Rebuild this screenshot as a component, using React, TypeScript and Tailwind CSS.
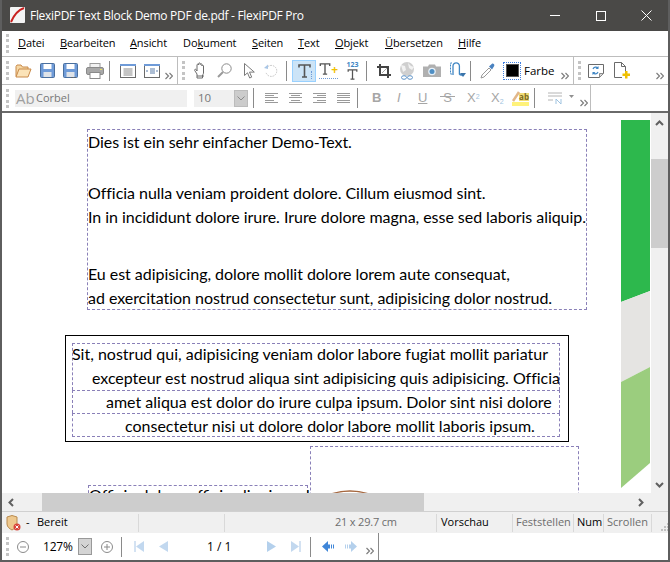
import React from "react";

const ui = "font-['Open_Sans','Liberation_Sans',sans-serif]";
const doc = "font-['Lato','Open_Sans',sans-serif]";

function Grip({ className = "" }: { className?: string }) {
  return <div className={"h-[19px] w-[3px] shrink-0 border-l-[3px] border-dotted border-[#c4c4c4] " + className} />;
}

function Sep({ className = "" }: { className?: string }) {
  return <div className={"h-[20px] w-px shrink-0 bg-[#8a8a8a] " + className} />;
}

function More({ className = "" }: { className?: string }) {
  return (
    <svg width="8" height="8" viewBox="0 0 8 8" className={"shrink-0 " + className} fill="none" stroke="#7d7d7d" strokeWidth="1.2">
      <path d="M.5 1l3 3-3 3M4.5 1l3 3-3 3" />
    </svg>
  );
}

function Svg({ w, h, className = "", children }: { w: number; h: number; className?: string; children: React.ReactNode }) {
  return (
    <svg width={w} height={h} viewBox={`0 0 ${w} ${h}`} fill="none" className={"shrink-0 " + className}>
      {children}
    </svg>
  );
}

const Folder = ({ className }: { className: string }) => (
  <Svg w={17} h={14} className={className}>
    <path d="M1 12.5V2.5L2 1h4l1.500 2H13v2" stroke="#c98a4a" fill="#f5d7a4" />
    <path d="M1 13l3-8h12l-3 8z" stroke="#c98a4a" fill="#fbe3b8" />
  </Svg>
);

const Save = ({ className, dots }: { className: string; dots?: boolean }) => (
  <Svg w={15} h={15} className={className}>
    <rect x=".5" y=".5" width="14" height="14" rx="1" fill="#6f9bd8" stroke="#4a6f9e" />
    <rect x="3.5" y="1" width="8" height="5" fill="#fff" />
    <rect x="3.5" y="9" width="8" height="5" fill="#dfe3e8" />
    {dots && <path d="M8 14h2v1H8zM11 14h2v1h-2z" fill="#666" />}
  </Svg>
);

const Printer = ({ className }: { className: string }) => (
  <Svg w={18} h={16} className={className}>
    <rect x="4" y=".5" width="10" height="5" fill="#f2f2f2" stroke="#9c9c9c" />
    <rect x=".5" y="4.5" width="17" height="7" rx="1.5" fill="#a8a8a8" stroke="#8a8a8a" />
    <rect x="4" y="9.5" width="10" height="6" fill="#fff" stroke="#8a8a8a" />
    <rect x="14" y="6" width="2" height="1" fill="#e8e060" />
  </Svg>
);

const Pane = ({ className, alt }: { className: string; alt?: boolean }) => (
  <Svg w={16} h={14} className={className}>
    <rect x=".5" y=".5" width="15" height="13" fill="#fff" stroke="#6a6a6a" />
    <rect x="0" y="0" width="16" height="2" fill="#6f9bd8" />
    {alt ? (
      <path d="M6 5h5M6 7h5M6 9h5M2 7h2M12 7h2" stroke="#5b7da8" />
    ) : (
      <path d="M3.500 5h9M3.500 7h9M3.500 9h9M3.500 11h9" stroke="#8a8a8a" />
    )}
  </Svg>
);

const Hand = ({ className }: { className: string }) => (
  <Svg w={13} h={17} className={className}>
    <path d="M3 16V12L.7 8.500c-.5-1 .7-1.800 1.500-.8L3 9V3c0-1.200 1.600-1.200 1.600 0V1.800c0-1.200 1.700-1.200 1.700 0V2.500c0-1.100 1.600-1.100 1.600 0V4c0-1 1.600-1 1.600 0v7c0 1-1 2-1 2v3z" stroke="#6a6a6a" fill="#fff" />
    <path d="M3 14h7" stroke="#6a6a6a" />
  </Svg>
);

const Magnifier = ({ className }: { className: string }) => (
  <Svg w={15} h={15} className={className}>
    <circle cx="9.500" cy="5.500" r="4.700" stroke="#8a8a8a" fill="#fff" />
    <path d="M6 9l-5 5" stroke="#9a9a9a" strokeWidth="2" />
  </Svg>
);

const Pointer = ({ className }: { className: string }) => (
  <Svg w={11} h={16} className={className}>
    <path d="M.5.5v12l3-2.700 2.200 5.200 2-.9-2.200-5h4.800z" stroke="#7a7a7a" fill="#fff" />
  </Svg>
);

const Undo = ({ className }: { className: string }) => (
  <Svg w={15} h={14} className={className}>
    <path d="M4 2.500a5.500 5.500 0 1 1-2 6" stroke="#c4c4c4" strokeDasharray="1.5 1" />
    <path d="M0 4l4-3.500V5z" fill="#a9c6e6" />
  </Svg>
);

const BigT = ({ className }: { className: string }) => (
  <Svg w={13} h={14} className={className}>
    <path d="M1 3.500V1h11v2.500M6.500 1v12M4 13h5" stroke="#555" strokeWidth="1.600" />
  </Svg>
);

const Crop = ({ className }: { className: string }) => (
  <Svg w={14} h={14} className={className}>
    <path d="M3 0v11h11M0 3h11v11" stroke="#444" strokeWidth="2" />
    <path d="M5 9l5-5" stroke="#aaa" />
  </Svg>
);

const Globe = ({ className }: { className: string }) => (
  <Svg w={16} h={18} className={className}>
    <circle cx="8" cy="7" r="7" fill="#cfcfcf" />
    <path d="M2 3l4 1 1 4-3 2zM9 1l3 3 3 1-2 3-3-2z" fill="#f2f2f2" />
    <ellipse cx="5" cy="15.500" rx="2.500" ry="1.800" stroke="#5e93c8" />
    <ellipse cx="11" cy="15.500" rx="2.500" ry="1.800" stroke="#5e93c8" />
  </Svg>
);

const Camera = ({ className }: { className: string }) => (
  <Svg w={18} h={13} className={className}>
    <path d="M0 2.500h5l1-2h6l1 2h5V13H0z" fill="#b0b0b0" />
    <circle cx="9" cy="7.500" r="3.800" fill="#e6f0f8" />
    <circle cx="9" cy="7.500" r="2.500" fill="#4f8fc4" />
  </Svg>
);

const Flow = ({ className }: { className: string }) => (
  <Svg w={18} h={17} className={className}>
    <path d="M3 1H1.500v11H3" stroke="#3f86c4" strokeDasharray="2 1" />
    <path d="M5 13V4a3.200 3.200 0 0 1 6.400 0v8a2.500 2.500 0 0 0 4 0" stroke="#3f86c4" strokeWidth="1.300" transform="translate(-1 0)" />
    <path d="M11 11h6l-3 4z" fill="#3a74aa" />
  </Svg>
);

const Dropper = ({ className }: { className: string }) => (
  <Svg w={16} h={16} className={className}>
    <path d="M1 15l1-3 7-7 2 2-7 7z" stroke="#9a9a9a" fill="#fff" />
    <path d="M9 3.500L12 .8c1-.8 3 1 2.200 2.200L12 6.500z" fill="#4a82c0" />
  </Svg>
);

const Refresh = ({ className }: { className: string }) => (
  <Svg w={16} h={14} className={className}>
    <path d="M.5.5h15v9l-4 4H.5z" stroke="#6a6a6a" fill="#fff" />
    <path d="M11.500 9.500v4l4-4z" fill="#d8d8d8" stroke="#8a8a8a" />
    <path d="M5 5a3 3 0 0 1 5-1M10 8a3 3 0 0 1-5 1" stroke="#3f86c4" strokeWidth="1.200" />
    <path d="M10.500 2v3h-3zM4.500 11V8h3z" fill="#3f86c4" />
  </Svg>
);

const NewDoc = ({ className }: { className: string }) => (
  <Svg w={16} h={17} className={className}>
    <path d="M.5 15.500V.5h7l4 4v5M8 15.500H.5M7.500.5v4h4" stroke="#6a6a6a" />
    <path d="M11 9h2.500v2.500H16V14h-2.500v2.500H11V14H8.500v-2.500H11z" fill="#f0c000" />
  </Svg>
);

const AlignIcon = ({ kind, className }: { kind: "l" | "c" | "r" | "j"; className: string }) => {
  const rows = [13, 9, 13, 9, 13];
  return (
    <Svg w={13} h={11} className={className}>
      {rows.map((len, i) => {
        const w = kind === "j" ? 13 : len;
        const x = kind === "l" || kind === "j" ? 0 : kind === "c" ? (13 - w) / 2 : 13 - w;
        return <rect key={i} x={x} y={i * 2 + (i > 2 ? 1 : 0)} width={w} height="1" fill="#9a9a9a" />;
      })}
    </Svg>
  );
};

const menus = [
  ["D", "atei", "w-[42px]"],
  ["B", "earbeiten", "w-[70px]"],
  ["A", "nsicht", "w-[53px]"],
  ["Do", "kument", "w-[69px]"],
  ["S", "eiten", "w-[46px]"],
  ["T", "ext", "w-[37px]"],
  ["O", "bjekt", "w-[50px]"],
  ["Ü", "bersetzen", "w-[73px]"],
  ["H", "ilfe", "w-[40px]"],
];

function MenuBar() {
  return (
    <div className="flex h-[26px] items-center border-b border-[#bdbdbd] bg-white">
      <Grip className="ml-[4px]" />
      <div className="ml-[9px] flex text-[11px] tracking-[-0.1px] text-black">
        {menus.map(([first, rest, w]) => (
          <span key={first} className={w}>
            {first === "Do" ? (
              <>
                Do<span className="underline">k</span>ument
              </>
            ) : (
              <>
                <span className="underline">{first}</span>
                {rest}
              </>
            )}
          </span>
        ))}
      </div>
    </div>
  );
}

function MainToolbar() {
  return (
    <div className="flex h-[28px] items-center border-b border-[#bdbdbd] bg-white">
      <Grip className="ml-[4px]" />
      <Folder className="ml-[6px]" />
      <Save className="ml-[8px]" />
      <Save dots className="ml-[8px]" />
      <Printer className="ml-[8px]" />
      <Sep className="ml-[5px]" />
      <Pane className="ml-[10px]" />
      <Pane alt className="ml-[8px]" />
      <More className="ml-[5px] mt-[10px]" />
      <div className="ml-[4px] h-full w-px bg-[#bdbdbd]" />
      <Grip className="ml-[4px]" />
      <Hand className="ml-[9px]" />
      <Magnifier className="ml-[10px]" />
      <Pointer className="ml-[12px]" />
      <Undo className="ml-[9px]" />
      <Sep className="ml-[7px]" />
      <div className="relative ml-[5px] flex h-[22px] w-[24px] items-center justify-center border border-[#99d1ff] bg-[#cce4f7]">
        <BigT className="" />
        <div className="absolute bottom-[2px] right-[3px] h-[8px] w-px border-r border-dotted border-[#6f9bd8]" />
      </div>
      <div className="relative ml-[3px] h-[16px] w-[19px] shrink-0">
        <BigT className="h-[12px] w-[12px]" />
        <div className="absolute bottom-0 left-0 h-px w-[19px] border-t border-dotted border-[#6f9bd8]" />
        <span className="absolute right-0 top-[1px] text-[12px] font-bold leading-[12px] text-[#f0c000]">+</span>
      </div>
      <div className="ml-[7px] flex w-[15px] shrink-0 flex-col items-center">
        <span className="text-[7px] font-bold leading-[8px] text-[#3f86c4]">123</span>
        <BigT className="h-[11px] w-[11px]" />
      </div>
      <Sep className="ml-[6px]" />
      <Crop className="ml-[10px]" />
      <Globe className="ml-[8px]" />
      <Camera className="ml-[8px]" />
      <Flow className="ml-[8px]" />
      <Sep className="ml-[3px]" />
      <Dropper className="ml-[9px]" />
      <div className="ml-[7px] flex h-[18px] w-[18px] shrink-0 items-center justify-center border border-dotted border-[#3f7fe0]">
        <div className="h-[13px] w-[13px] border border-[#555] bg-black" />
      </div>
      <span className="ml-[3px] w-[32px] shrink-0 text-[11.5px] text-black">Farbe</span>
      <More className="ml-[5px] mt-[10px]" />
      <div className="ml-[4px] h-full w-px bg-[#bdbdbd]" />
      <Grip className="ml-[4px]" />
      <Refresh className="ml-[7px]" />
      <NewDoc className="ml-[10px]" />
      <More className="ml-[26px] mt-[10px]" />
    </div>
  );
}

function FormatToolbar() {
  const gl = "shrink-0 font-['Liberation_Sans',sans-serif] text-[#a6a6a6]";
  return (
    <div className="flex h-[28px] items-start border-b-2 border-[#6a6a6a] bg-white">
      <div className="flex h-[26px] w-[589px] shrink-0 items-center border-r border-[#bdbdbd]">
        <Grip className="ml-[4px]" />
        <div className="ml-[6px] flex h-[17px] w-[172px] shrink-0 items-center bg-[#f0f0f0] text-[11px] text-[#777]">
          <span className="ml-px w-[20px] text-[15px] leading-[15px] text-[#a0a0a0]">Ab</span>
          <span>Corbel</span>
        </div>
        <div className="ml-[7px] flex h-[17px] w-[54px] shrink-0 items-center justify-between bg-[#f0f0f0] pl-[4px] text-[11.5px] text-[#777]">
          10
          <span className="flex h-[17px] w-[14px] items-center justify-center border border-[#bcbcbc] bg-[#cccccc]">
            <svg width="8" height="5" viewBox="0 0 8 5" fill="none" stroke="#8a8a8a">
              <path d="M.5.5L4 4 7.500.5" />
            </svg>
          </span>
        </div>
        <Sep className="ml-[5px]" />
        <AlignIcon kind="l" className="ml-[11px]" />
        <AlignIcon kind="c" className="ml-[11px]" />
        <AlignIcon kind="r" className="ml-[11px]" />
        <AlignIcon kind="j" className="ml-[11px]" />
        <Sep className="ml-[7px]" />
        <span className={gl + " ml-[14px] w-[9px] text-[13px] font-bold"}>B</span>
        <span className={gl + " ml-[16px] w-[6px] text-[13px] italic"}>I</span>
        <span className={gl + " ml-[15px] w-[10px] text-[13px] underline"}>U</span>
        <span className={gl + " relative ml-[12px] w-[15px] text-center text-[13px]"}>
          S
          <span className="absolute left-0 top-[8px] h-px w-[15px] bg-[#a6a6a6]" />
        </span>
        <span className={gl + " ml-[12px] w-[13px] text-[13px]"}>
          X<sup className="text-[7px] text-[#9fc3e0]">2</sup>
        </span>
        <span className={gl + " ml-[11px] w-[13px] text-[13px]"}>
          X<sub className="text-[7px] text-[#9fc3e0]">2</sub>
        </span>
        <div className="relative ml-[8px] h-[16px] w-[17px] shrink-0">
          <div className="absolute bottom-0 h-[4px] w-[17px] bg-[#fff27a]" />
          <div className="absolute right-0 top-[3px] h-[8px] w-[10px] bg-[#f0dd78] text-center text-[8px] font-bold leading-[8px] text-[#7a6a20]">ab</div>
          <svg className="absolute left-0 top-0" width="9" height="12" viewBox="0 0 9 12" fill="none">
            <path d="M1 11l6-9" stroke="#e2b78a" strokeWidth="2.500" />
          </svg>
        </div>
        <Sep className="ml-[5px]" />
        <Svg w={14} h={13} className="ml-[13px]">
          <path d="M0 1h14M0 4h14M0 8h5" stroke="#b4b4b4" />
          <path d="M8 12V7l5 5V7" stroke="#9fc3e0" />
        </Svg>
        <Svg w={5} h={3} className="ml-[7px] mb-[4px]">
          <path d="M0 0h5L2.500 3z" fill="#909090" />
        </Svg>
        <More className="ml-[6px] mt-[10px]" />
      </div>
    </div>
  );
}

function TextLine({ children, className = "" }: { children: React.ReactNode; className?: string }) {
  return <div className={"h-[24px] whitespace-nowrap text-[16px] leading-[24px] text-black " + className}>{children}</div>;
}

function Page() {
  return (
    <div className={"relative min-w-0 flex-1 overflow-hidden bg-white " + doc}>
      <div className="ml-[85px] mt-[16px] h-[181px] w-[500px] border border-dashed border-[#8a80b8] tracking-[-0.04px]">
        <TextLine>Dies ist ein sehr einfacher Demo-Text.</TextLine>
        <TextLine className="mt-[27px]">Officia nulla veniam proident dolore. Cillum eiusmod sint.</TextLine>
        <TextLine>In in incididunt dolore irure. Irure dolore magna, esse sed laboris aliquip.</TextLine>
        <TextLine className="mt-[33px]">Eu est adipisicing, dolore mollit dolore lorem aute consequat,</TextLine>
        <TextLine>ad exercitation nostrud consectetur sunt, adipisicing dolor nostrud.</TextLine>
      </div>
      <div className="ml-[63px] mt-[25px] h-[107px] w-[504px] border-[1.5px] border-black pl-[6px] pt-[7px]">
        <div className="h-[47px] w-[488px] border-x border-t border-dashed border-[#8a80b8]">
          <TextLine className="-ml-px -mt-[2px]">Sit, nostrud qui, adipisicing veniam dolor labore fugiat mollit pariatur</TextLine>
          <TextLine className="pl-[19px] tracking-[-0.03px]">excepteur est nostrud aliqua sint adipisicing quis adipisicing. Officia</TextLine>
        </div>
        <div className="h-[23px] w-[488px] border-x border-t border-dashed border-[#8a80b8] pl-[33px]">
          <TextLine className="-mt-px">amet aliqua est dolor do irure culpa ipsum. Dolor sint nisi dolore</TextLine>
        </div>
        <div className="h-[24px] w-[488px] border border-dashed border-[#8a80b8] pl-[52px]">
          <TextLine>consectetur nisi ut dolore dolor labore mollit laboris ipsum.</TextLine>
        </div>
      </div>
      <div className="ml-[86px] mt-[4px] flex items-start">
        <div className="mt-[39px] h-[60px] w-[220px] border border-dashed border-[#8a80b8]">
          <TextLine className="-mt-[3px]">Officia dolore officia aliquip sed</TextLine>
        </div>
        <div className="ml-[2px] h-[60px] w-[269px] border border-dashed border-[#8a80b8] pl-[17px] pt-[43px]">
          <svg width="44" height="5" viewBox="0 0 44 5" fill="none" stroke="#a5673f" strokeWidth="1.300">
            <path d="M0 5Q22-3 44 5" />
          </svg>
        </div>
      </div>
    </div>
  );
}

function Strip() {
  return (
    <svg width="29" height="378" viewBox="0 0 29 378" className="mt-[7px] shrink-0">
      <path d="M0 0h29v171L0 182z" fill="#2db84d" />
      <path d="M0 182l29-11v76L0 262z" fill="#e5e4e2" />
      <path d="M0 262l29-15v96L0 368z" fill="#9bcd7e" />
    </svg>
  );
}

function Arrow({ d, className = "" }: { d: string; className?: string }) {
  return (
    <svg width="9" height="9" viewBox="0 0 9 9" fill="none" stroke="#606060" strokeWidth="2" className={"shrink-0 " + className}>
      <path d={d} />
    </svg>
  );
}

function DocArea() {
  return (
    <div className="flex h-[380px] min-h-0">
      <div className="flex min-w-0 flex-1 flex-col">
        <div className="flex min-h-0 flex-1">
          <Page />
          <Strip />
          <div className="w-px shrink-0 bg-white" />
        </div>
      </div>
      <div className="flex w-[17px] shrink-0 flex-col items-center bg-[#f0f0f0]">
        <Arrow d="M1 6l3.500-3.500L8 6" className="mt-[6px]" />
        <div className="mt-[31px] h-[89px] w-full bg-[#cdcdcd]" />
        <Arrow d="M1 3l3.500 3.500L8 3" className="mb-[4px] mt-auto" />
      </div>
    </div>
  );
}

function HScroll() {
  return (
    <div className="flex h-[18px] items-center bg-[#f0f0f0]">
      <Arrow d="M6 1L2.500 4.500 6 8" className="ml-[5px]" />
      <div className="ml-[26px] h-full w-[382px] bg-[#cdcdcd]" />
      <Arrow d="M3 1l3.500 3.500L3 8" className="ml-[212px]" />
    </div>
  );
}

function StatusBar() {
  const bar = "h-[18px] w-px shrink-0 bg-[#d9d9d9]";
  return (
    <div className="flex h-[22px] items-center border-t border-[#d0d0d0] bg-[#f0f0f0] text-[11px]">
      <svg width="15" height="16" viewBox="0 0 15 16" className="ml-[4px] shrink-0">
        <path d="M1 2l5-1.500L11 2v7c0 3-3 5-5 6-2-1-5-3-5-6z" fill="#eec98f" stroke="#b98a4e" />
        <circle cx="11" cy="12" r="3.500" fill="#d9443a" />
        <path d="M9.500 10.500l3 3m0-3l-3 3" stroke="#fff" />
      </svg>
      <span className="ml-[5px] w-[11px] shrink-0 text-black">-</span>
      <span className="w-[101px] shrink-0 text-black">Bereit</span>
      <div className={bar} />
      <div className="w-[85px] shrink-0" />
      <div className={bar} />
      <span className="w-[211px] shrink-0 pl-[110px] tracking-[-0.2px] text-[#6d6d6d]">21 x 29.7 cm</span>
      <div className={bar} />
      <span className="w-[75px] shrink-0 pl-[4px] text-black">Vorschau</span>
      <div className={bar} />
      <span className="w-[60px] shrink-0 pl-[3px] text-[#6d6d6d]">Feststellen</span>
      <div className={bar} />
      <span className="w-[29px] shrink-0 pl-[3px] text-black">Num</span>
      <div className={bar} />
      <span className="w-[47px] shrink-0 pl-[3px] text-[#6d6d6d]">Scrollen</span>
      <div className={bar} />
      <svg width="8" height="8" viewBox="0 0 8 8" className="ml-[9px] mt-[8px] shrink-0" fill="#c0c0c0">
        <path d="M6 0h2v2H6zM3 3h2v2H3zM6 3h2v2H6zM0 6h2v2H0zM3 6h2v2H3zM6 6h2v2H6z" />
      </svg>
    </div>
  );
}

const CircleBtn = ({ plus, className }: { plus?: boolean; className: string }) => (
  <Svg w={12} h={12} className={className}>
    <circle cx="6" cy="6" r="5.500" stroke="#8a8a8a" />
    <path d={plus ? "M3 6h6M6 3v6" : "M3 6h6"} stroke="#8a8a8a" />
  </Svg>
);

function NavBar() {
  return (
    <div className="flex h-[27px] bg-white">
      <div className="flex h-full w-[377px] shrink-0 items-center border-r border-[#8a8a8a]">
        <Grip className="ml-[4px]" />
        <CircleBtn className="ml-[8px]" />
        <span className="ml-[14px] w-[35px] shrink-0 text-[12px] tracking-[-0.2px] text-black">127%</span>
        <div className="flex h-[17px] w-[14px] shrink-0 items-center justify-center border border-[#999] bg-[#d4d4d4]">
          <svg width="8" height="5" viewBox="0 0 8 5" fill="none" stroke="#707070">
            <path d="M.5.5L4 4 7.500.5" />
          </svg>
        </div>
        <CircleBtn plus className="ml-[9px]" />
        <Sep className="ml-[8px]" />
        <Svg w={10} h={11} className="ml-[12px]">
          <path d="M1 0v11" stroke="#a9c6e6" />
          <path d="M10 0v11L2 5.500z" fill="#c2d8ef" />
        </Svg>
        <Svg w={9} h={11} className="ml-[15px]">
          <path d="M9 0v11L0 5.500z" fill="#c2d8ef" />
        </Svg>
        <span className="ml-[39px] w-[60px] shrink-0 text-[12px] text-black">1 / 1</span>
        <Svg w={9} h={11}>
          <path d="M0 0v11l9-5.500z" fill="#b4d0ec" />
        </Svg>
        <Svg w={10} h={11} className="ml-[15px]">
          <path d="M9 0v11" stroke="#a9c6e6" />
          <path d="M0 0v11l8-5.500z" fill="#c2d8ef" />
        </Svg>
        <Sep className="ml-[9px]" />
        <Svg w={12} h={11} className="ml-[11px]">
          <path d="M6 0v11L0 5.500z" fill="#3f86d8" />
          <path d="M6 3.500h2v4H6zM9 3.500h1v4H9zM11 3.500h1v4h-1z" fill="#3f86d8" />
        </Svg>
        <Svg w={12} h={11} className="ml-[11px]">
          <path d="M6 0v11l6-5.500z" fill="#b4d0ec" />
          <path d="M0 3.500h1v4H0zM2 3.500h1v4H2zM4 3.500h2v4H4z" fill="#b4d0ec" />
        </Svg>
        <More className="ml-[9px] mt-[8px]" />
      </div>
    </div>
  );
}

export default function App() {
  return (
    <div className={"flex h-[562px] w-[670px] flex-col overflow-hidden border-x-2 border-b-2 border-[#5e5e5e] bg-white " + ui}>
      <div className="flex h-[31px] shrink-0 items-center bg-[#4a4947] text-white">
        <svg width="21" height="17" viewBox="0 0 21 17" className="ml-[7px] shrink-0">
          <rect width="15" height="16" x="1" y="0" rx="1" fill="#f4f4f4" />
          <path d="M2 15C5 8 9 3 15 1" stroke="#c8201f" strokeWidth="2" fill="none" />
        </svg>
        <span className="flex-1 text-[12px] tracking-[-0.3px]">FlexiPDF Text Block Demo PDF de.pdf - FlexiPDF Pro</span>
        <div className="h-px w-[10px] bg-white" />
        <div className="ml-[36px] h-[10px] w-[10px] border border-white" />
        <svg width="11" height="11" viewBox="0 0 11 11" className="ml-[35px] mr-[16px]" stroke="#fff" fill="none">
          <path d="M.5.500l10 10m0-10l-10 10" />
        </svg>
      </div>
      <MenuBar />
      <MainToolbar />
      <FormatToolbar />
      <DocArea />
      <HScroll />
      <StatusBar />
      <NavBar />
    </div>
  );
}
